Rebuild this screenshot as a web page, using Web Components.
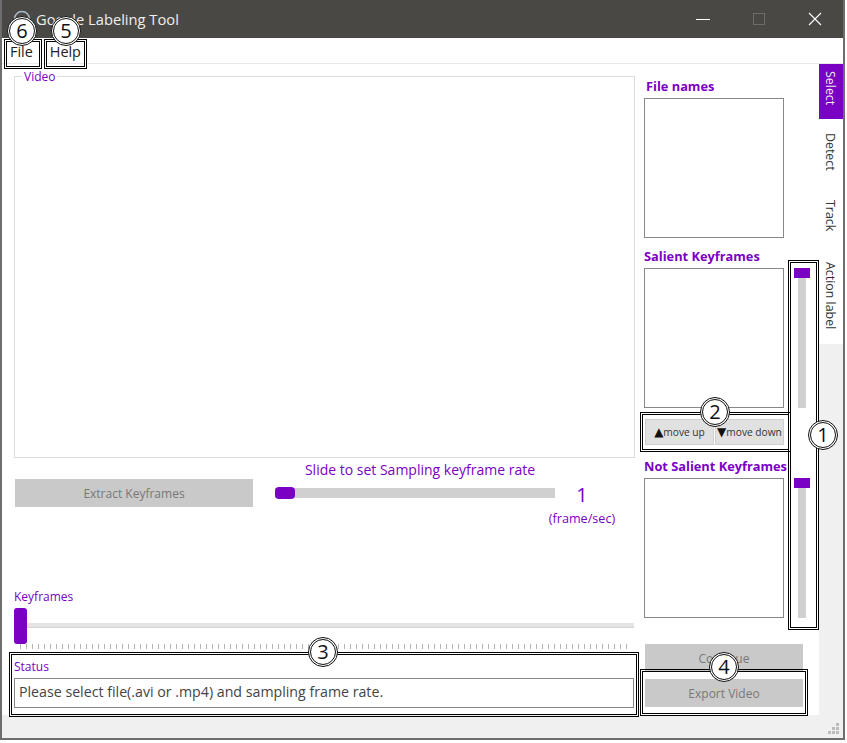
<!DOCTYPE html>
<html>
<head>
<meta charset="utf-8">
<title>Google Labeling Tool</title>
<style>
  html, body { margin: 0; background: #fff; }
  body { font-family: "Open Sans", "Noto Sans", sans-serif; font-size: 12px; }
</style>
</head>
<body>
<app-window>
  <title-bar slot="title">Google Labeling Tool</title-bar>
  <menu-bar slot="menu"></menu-bar>

  <div slot="left">
    <group-box label="Video"></group-box>
    <sampling-row></sampling-row>
    <keyframe-strip></keyframe-strip>
    <status-box>Please select file(.avi or .mp4) and sampling frame rate.</status-box>
  </div>

  <right-panel slot="right"></right-panel>
  <side-tabs slot="tabs"></side-tabs>
</app-window>

<call-out n="1" style="--x:788px;--y:260px;--w:31px;--h:370px;--cx:823px;--cy:435px"></call-out>
<call-out n="2" style="--x:640px;--y:412px;--w:151px;--h:40px;--cx:715px;--cy:412px"></call-out>
<call-out n="3" style="--x:9px;--y:652px;--w:630px;--h:65px;--cx:323px;--cy:652px"></call-out>
<call-out n="4" style="--x:640px;--y:669px;--w:168px;--h:47px;--cx:724px;--cy:667px"></call-out>
<call-out n="5" style="--x:44px;--y:39px;--w:43px;--h:30px;--cx:66px;--cy:31px"></call-out>
<call-out n="6" style="--x:4px;--y:39px;--w:38px;--h:30px;--cx:22px;--cy:31px"></call-out>

<script>
const PURPLE = '#7a00c4';

class AppWindow extends HTMLElement {
    constructor() {
        super();
        this.attachShadow({ mode: 'open' });
        this.shadowRoot.innerHTML = `
        <style>
            :host { display: block; box-sizing: border-box; width: 845px; height: 740px;
                border: solid #6d6d6d; border-width: 0 2px 2px 2px; background: #f0f0f0; }
            .main { display: grid; grid-template-columns: 817px 24px; height: 651px; }
            .content { display: grid; grid-template-columns: 642px 175px; background: #fff; }
            .left { padding: 12px 0 0 12px; }
            .grip { display: flex; justify-content: flex-end; padding: 8px 3px 0 0; }
        </style>
        <slot name="title"></slot>
        <slot name="menu"></slot>
        <div class="main">
            <div class="content">
                <div class="left"><slot name="left"></slot></div>
                <slot name="right"></slot>
            </div>
            <slot name="tabs"></slot>
        </div>
        <div class="grip">
            <svg width="12" height="12" viewBox="0 0 12 12" fill="#bcbcbc">
                <rect x="8" y="0" width="3" height="3"/>
                <rect x="4" y="4" width="3" height="3"/><rect x="8" y="4" width="3" height="3"/>
                <rect x="0" y="8" width="3" height="3"/><rect x="4" y="8" width="3" height="3"/><rect x="8" y="8" width="3" height="3"/>
            </svg>
        </div>`;
    }
}

class TitleBar extends HTMLElement {
    constructor() {
        super();
        this.attachShadow({ mode: 'open' });
        this.shadowRoot.innerHTML = `
        <style>
            :host { display: flex; align-items: center; height: 38px; background: #4a4845; color: #eee;
                font-size: 14.7px; padding-left: 11px; }
            svg.ico { margin-right: 5px; }
            .name { flex: 1; }
            .btn { width: 56px; display: flex; justify-content: center; }
        </style>
        <svg class="ico" width="18" height="18"><circle cx="9" cy="9" r="7.5" fill="none" stroke="#a9bccb" stroke-width="1.5"/></svg>
        <span class="name"><slot></slot></span>
        <span class="btn"><svg width="14" height="14"><path d="M0 7.5H14" stroke="#fff"/></svg></span>
        <span class="btn"><svg width="12" height="12"><rect x=".5" y=".5" width="11" height="11" fill="none" stroke="#6e6c69"/></svg></span>
        <span class="btn"><svg width="14" height="14"><path d="M1 1L13 13M13 1L1 13" stroke="#fff" stroke-width="1.1"/></svg></span>`;
    }
}

class MenuBar extends HTMLElement {
    constructor() {
        super();
        this.attachShadow({ mode: 'open' });
        this.shadowRoot.innerHTML = `
        <style>
            :host { display: flex; height: 26px; box-sizing: border-box; background: #fff;
                border-bottom: 1px solid #e8e8e8; font-size: 14.4px; color: #222; padding: 4px 0 0 8px; gap: 17px; line-height: 20px; }
        </style>
        <span>File</span><span>Help</span>`;
    }
}

class GroupBox extends HTMLElement {
    constructor() {
        super();
        this.attachShadow({ mode: 'open' });
        const label = this.getAttribute('label');
        this.shadowRoot.innerHTML = `
        <style>
            :host { display: block; box-sizing: border-box; width: 621px; height: 382px; border: 1px solid #dcdcdc; position: relative; }
            span { position: absolute; top: -7px; left: 7px; padding: 0 2px; background: #fff; color: ${PURPLE}; line-height: 13px; }
        </style>
        <span>${label}</span>`;
    }
}

class FlatButton extends HTMLElement {
    constructor() {
        super();
        this.attachShadow({ mode: 'open' });
        this.shadowRoot.innerHTML = `
        <style>
            :host { display: flex; align-items: center; justify-content: center; box-sizing: border-box;
                background: #c9c9c9; color: #787878; font-size: 12px; white-space: nowrap; }
        </style>
        <slot></slot>`;
    }
}
// los dos botones pequeños llevan borde y texto oscuro
class SmallButton extends HTMLElement {
    constructor() {
        super();
        this.attachShadow({ mode: 'open' });
        this.shadowRoot.innerHTML = `
        <style>
            :host { display: flex; align-items: center; justify-content: center; box-sizing: border-box; height: 26px; flex: 1;
                background: #e1e1e1; border: 1px solid #cfcfcf; color: #333; font-size: 10.2px; white-space: nowrap; }
        </style>
        <slot></slot>`;
    }
}

class SamplingRow extends HTMLElement {
    constructor() {
        super();
        this.attachShadow({ mode: 'open' });
        this.shadowRoot.innerHTML = `
        <style>
            :host { display: grid; grid-template-columns: 239px 281px 102px; height: 130px; color: ${PURPLE}; }
            flat-button { width: 238px; height: 28px; margin: 21px 0 0 1px; }
            .mid { padding: 2px 0 0 22px; width: 280px; }
            .cap { text-align: center; font-size: 14px; line-height: 19px; white-space: nowrap; padding-left: 10px; }
            .track { height: 10px; margin-top: 9px; background: #d0d0d0; position: relative; }
            .thumb { position: absolute; left: 0; top: -1px; width: 20px; height: 12px; border-radius: 4px; background: ${PURPLE}; }
            .rate { padding-top: 25px; text-align: center; margin-left: 2px; width: 92px; }
            .num { font-size: 20px; line-height: 24px; }
            .unit { margin-top: 4px; line-height: 16px; white-space: nowrap; font-size: 12.6px; }
        </style>
        <flat-button>Extract Keyframes</flat-button>
        <div class="mid">
            <div class="cap">Slide to set Sampling keyframe rate</div>
            <div class="track"><div class="thumb"></div></div>
        </div>
        <div class="rate"><div class="num">1</div><div class="unit">(frame/sec)</div></div>`;
    }
}

class KeyframeStrip extends HTMLElement {
    constructor() {
        super();
        this.attachShadow({ mode: 'open' });
        this.shadowRoot.innerHTML = `
        <style>
            :host { display: block; width: 620px; height: 70px; }
            .label { color: ${PURPLE}; line-height: 18px; margin-bottom: 2px; }
            .slider { height: 36px; position: relative; }
            .groove { position: absolute; left: 0; right: 0; top: 15px; height: 4px; background: #e4e4e4; border-bottom: 1px solid #d4d4d4; }
            .thumb { position: absolute; left: 0; top: 0; width: 13px; height: 36px; border-radius: 3px; background: ${PURPLE}; }
            .ticks { height: 5px; margin: 0 6px;
                background: repeating-linear-gradient(90deg, #b4b4b4 0 1px, transparent 1px 6px); }
        </style>
        <div class="label">Keyframes</div>
        <div class="slider"><div class="groove"></div><div class="thumb"></div></div>
        <div class="ticks"></div>`;
    }
}

class StatusBox extends HTMLElement {
    constructor() {
        super();
        this.attachShadow({ mode: 'open' });
        this.shadowRoot.innerHTML = `
        <style>
            :host { display: block; width: 620px; }
            .label { color: ${PURPLE}; line-height: 18px; margin-bottom: 2px; }
            .field { box-sizing: border-box; height: 30px; border: 1px solid #888; padding: 0 4px; line-height: 26px; color: #444; font-size: 14.2px; white-space: nowrap; }
        </style>
        <div class="label">Status</div>
        <div class="field"><slot></slot></div>`;
    }
}

class ListPanel extends HTMLElement {
    constructor() {
        super();
        this.attachShadow({ mode: 'open' });
        this.shadowRoot.innerHTML = `
        <style>
            :host { display: block; width: 140px; }
            .label { height: 18px; line-height: 12px; font-size: 12.8px; font-weight: 700; color: ${PURPLE}; white-space: nowrap; margin-left: ${this.getAttribute('indent') || 0}px; }
            .box { box-sizing: border-box; height: 140px; border: 1px solid #888; background: #fff; }
        </style>
        <div class="label">${this.getAttribute('label')}</div>
        <div class="box"></div>`;
    }
}

class VSlider extends HTMLElement {
    constructor() {
        super();
        this.attachShadow({ mode: 'open' });
        this.shadowRoot.innerHTML = `
        <style>
            :host { display: block; width: 16px; height: 140px; position: relative; }
            .track { position: absolute; left: 4px; top: 0; bottom: 0; width: 8px; background: #d0d0d0; }
            .thumb { position: absolute; left: 0; top: 0; width: 16px; height: 10px; background: ${PURPLE}; }
        </style>
        <div class="track"></div><div class="thumb"></div>`;
    }
}

class RightPanel extends HTMLElement {
    constructor() {
        super();
        this.attachShadow({ mode: 'open' });
        this.shadowRoot.innerHTML = `
        <style>
            :host { display: grid; grid-template-columns: 150px 25px; align-content: start; padding-top: 16px; }
            .rows { display: flex; flex-direction: column; }
            .gap { height: 12px; }
            .moves { display: flex; gap: 1px; width: 139px; margin: 11px 0 0 1px; }
            .sliders { padding-top: 188px; }
            .sliders v-slider + v-slider { margin-top: 70px; }
            .actions { grid-column: 1 / 3; display: flex; flex-direction: column; gap: 7px; width: 158px; margin: 26px 0 0 1px; }
            .actions flat-button { height: 28px; }
            .tri { font-size: 12px; font-family: "DejaVu Sans", sans-serif; color: #111; }
        </style>
        <div class="rows">
            <list-panel label="File names" indent="2"></list-panel>
            <div class="gap"></div>
            <list-panel label="Salient Keyframes"></list-panel>
            <div class="moves">
                <small-button><span class="tri">▲</span>move up</small-button>
                <small-button><span class="tri">▼</span>move down</small-button>
            </div>
            <div class="gap" style="height:15px"></div>
            <list-panel label="Not Salient Keyframes"></list-panel>
        </div>
        <div class="sliders"><v-slider></v-slider><v-slider></v-slider></div>
        <div class="actions">
            <flat-button>Continue</flat-button>
            <flat-button>Export Video</flat-button>
        </div>`;
    }
}

class SideTabs extends HTMLElement {
    constructor() {
        super();
        this.attachShadow({ mode: 'open' });
        this.shadowRoot.innerHTML = `
        <style>
            :host { display: flex; flex-direction: column; background: #f0f0f0; }
            .tab { box-sizing: border-box; writing-mode: vertical-rl; background: #fff; color: #333; display: flex; align-items: center; padding-top: 14px; padding-right: 2px; font-size: 12.4px; }
            .on { background: ${PURPLE}; color: #eee; padding-top: 7px; }
        </style>
        <div class="tab on" style="height:55px">Select</div>
        <div class="tab" style="height:67px">Detect</div>
        <div class="tab" style="height:62px">Track</div>
        <div class="tab" style="height:96px">Action label</div>`;
    }
}

// Recuadros y círculos numerados que van encima de la captura
class CallOut extends HTMLElement {
    constructor() {
        super();
        this.attachShadow({ mode: 'open' });
        this.shadowRoot.innerHTML = `
        <style>
            :host { display: contents; }
            .box { position: absolute; left: var(--x); top: var(--y); width: var(--w); height: var(--h); box-sizing: border-box;
                border: 3px double #000; }
            .dot { position: absolute; left: var(--cx); top: var(--cy); width: 30px; height: 30px; margin: -15px 0 0 -15px; box-sizing: border-box;
                border: 3px double #111; border-radius: 50%; background: #fff; color: #111;
                font-size: 20px; line-height: 24px; text-align: center; }
        </style>
        <div class="box"></div>
        <div class="dot">${this.getAttribute('n')}</div>`;
    }
}

customElements.define('app-window', AppWindow);
customElements.define('title-bar', TitleBar);
customElements.define('menu-bar', MenuBar);
customElements.define('group-box', GroupBox);
customElements.define('flat-button', FlatButton);
customElements.define('small-button', SmallButton);
customElements.define('sampling-row', SamplingRow);
customElements.define('keyframe-strip', KeyframeStrip);
customElements.define('status-box', StatusBox);
customElements.define('list-panel', ListPanel);
customElements.define('v-slider', VSlider);
customElements.define('right-panel', RightPanel);
customElements.define('side-tabs', SideTabs);
customElements.define('call-out', CallOut);
</script>
</body>
</html>
